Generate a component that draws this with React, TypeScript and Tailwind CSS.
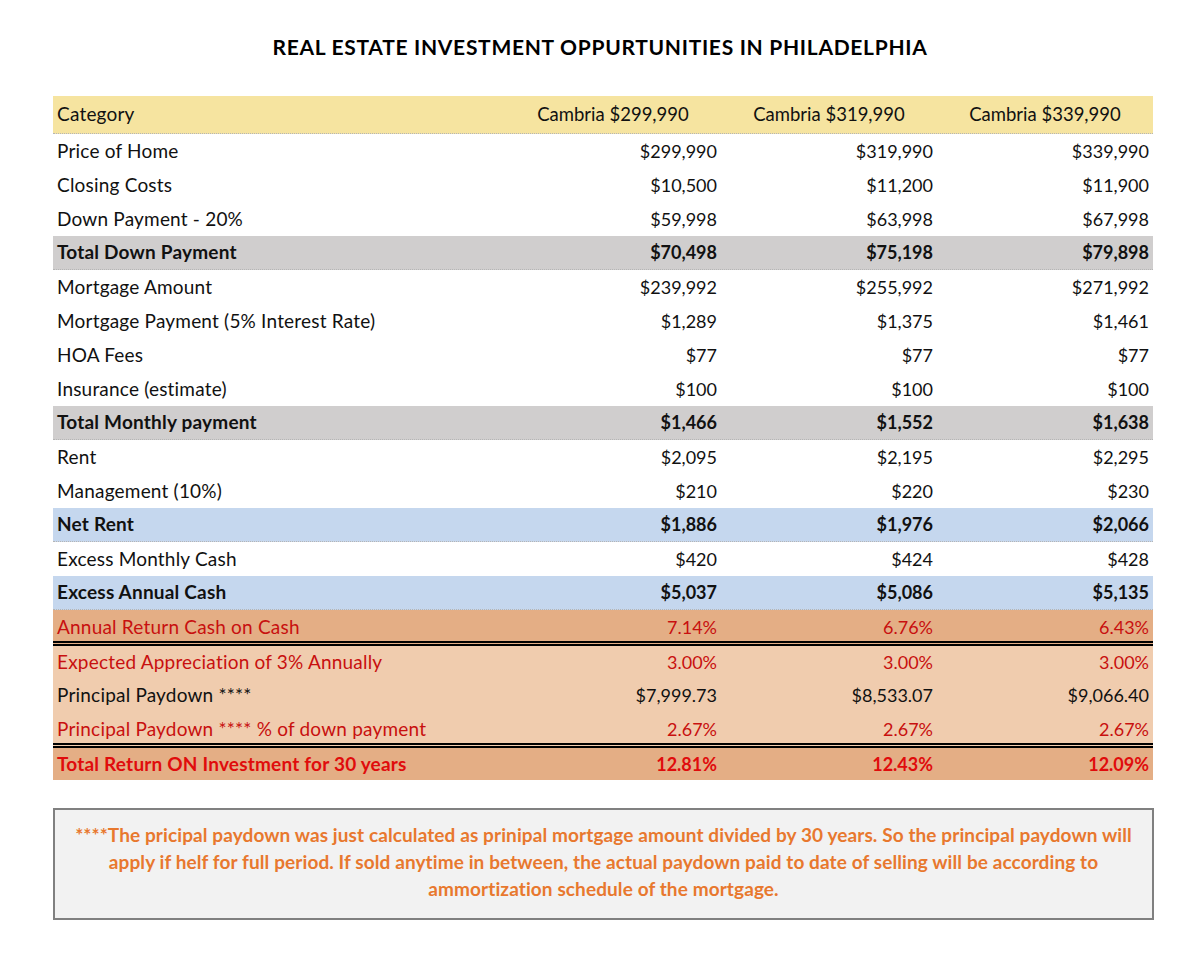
import React from 'react'

type Tone = 'plain' | 'gray' | 'blue' | 'orangeDark' | 'orangeLight'

type Row = {
  label: string
  values: string[]
  tone: Tone
  bold?: boolean
  red?: boolean
  bottom?: 'dotted' | 'double'
}

const rows: Row[] = [
  { label: 'Price of Home', values: ['$299,990', '$319,990', '$339,990'], tone: 'plain' },
  { label: 'Closing Costs', values: ['$10,500', '$11,200', '$11,900'], tone: 'plain' },
  { label: 'Down Payment - 20%', values: ['$59,998', '$63,998', '$67,998'], tone: 'plain' },
  { label: 'Total Down Payment', values: ['$70,498', '$75,198', '$79,898'], tone: 'gray', bold: true, bottom: 'dotted' },
  { label: 'Mortgage Amount', values: ['$239,992', '$255,992', '$271,992'], tone: 'plain' },
  { label: 'Mortgage Payment (5% Interest Rate)', values: ['$1,289', '$1,375', '$1,461'], tone: 'plain' },
  { label: 'HOA Fees', values: ['$77', '$77', '$77'], tone: 'plain' },
  { label: 'Insurance (estimate)', values: ['$100', '$100', '$100'], tone: 'plain' },
  { label: 'Total Monthly payment', values: ['$1,466', '$1,552', '$1,638'], tone: 'gray', bold: true, bottom: 'dotted' },
  { label: 'Rent', values: ['$2,095', '$2,195', '$2,295'], tone: 'plain' },
  { label: 'Management (10%)', values: ['$210', '$220', '$230'], tone: 'plain' },
  { label: 'Net Rent', values: ['$1,886', '$1,976', '$2,066'], tone: 'blue', bold: true, bottom: 'dotted' },
  { label: 'Excess Monthly Cash', values: ['$420', '$424', '$428'], tone: 'plain' },
  { label: 'Excess Annual Cash', values: ['$5,037', '$5,086', '$5,135'], tone: 'blue', bold: true, bottom: 'dotted' },
  { label: 'Annual Return Cash on Cash', values: ['7.14%', '6.76%', '6.43%'], tone: 'orangeDark', red: true, bottom: 'double' },
  { label: 'Expected Appreciation of 3% Annually', values: ['3.00%', '3.00%', '3.00%'], tone: 'orangeLight', red: true },
  { label: 'Principal Paydown ****', values: ['$7,999.73', '$8,533.07', '$9,066.40'], tone: 'orangeLight' },
  { label: 'Principal Paydown **** % of down payment', values: ['2.67%', '2.67%', '2.67%'], tone: 'orangeLight', red: true, bottom: 'double' },
  { label: 'Total Return ON Investment for 30 years', values: ['12.81%', '12.43%', '12.09%'], tone: 'orangeDark', bold: true, red: true },
]

const toneBg: Record<Tone, string> = {
  plain: 'bg-white',
  gray: 'bg-[#d0cece]',
  blue: 'bg-[#c5d7ee]',
  orangeDark: 'bg-[#e4ae85]',
  orangeLight: 'bg-[#f0ccae]',
}

function TableRow({ row, afterDouble }: { row: Row; afterDouble: boolean }) {
  const textColor = row.red
    ? (row.bold ? 'text-[#e00c0c]' : 'text-[#c8100f]')
    : 'text-[#111111]'
  const border = row.bottom === 'dotted'
    ? 'border-b border-dotted border-[#b5b5b5]'
    : row.bottom === 'double'
      ? 'border-b-[5px] border-double border-black'
      : ''
  // the double rule straddles the row boundary: that row grows 2px, the next one shrinks 2px
  const height = row.bottom === 'double' ? 'h-[36px]' : afterDouble ? 'h-[32px]' : 'h-[34px]'
  const nudge = row.bottom === 'double' ? 'pt-[3px]' : ''
  return (
    <div className={`box-border ${height} grid grid-cols-[452px_216px_216px_216px] ${toneBg[row.tone]} ${border} ${row.bold ? 'font-bold' : ''} ${textColor}`}>
      <div className={`flex items-center pl-[4px] whitespace-nowrap text-[19px] tracking-[0.2px] ${nudge}`}>{row.label}</div>
      {row.values.map((v, i) => (
        <div key={i} className={`flex items-center justify-end pr-[4px] text-[18px] ${nudge}`}>{v}</div>
      ))}
    </div>
  )
}

export default function App() {
  return (
    <div className="w-[1200px] h-[967px] bg-white" style={{ fontFamily: 'Lato, "Open Sans", sans-serif' }}>
      <h1 className="pt-[33px] text-center text-[21px] font-bold text-black tracking-[0.7px] leading-[28px]">
        REAL ESTATE INVESTMENT OPPURTUNITIES IN PHILADELPHIA
      </h1>

      <div className="ml-[53px] mt-[35px] w-[1100px]">
        <div className="box-border h-[38px] grid grid-cols-[452px_216px_216px_216px] bg-[#f6e4a0] border-b border-dotted border-[#b5b5b5] text-[#111111]">
          <div className="flex items-center pl-[4px] text-[19px] tracking-[0.2px]">Category</div>
          <div className="flex items-center justify-center text-[18.5px]">Cambria $299,990</div>
          <div className="flex items-center justify-center text-[18.5px]">Cambria $319,990</div>
          <div className="flex items-center justify-center text-[18.5px]">Cambria $339,990</div>
        </div>
        {rows.map((r, i) => (
          <TableRow key={r.label} row={r} afterDouble={i > 0 && rows[i - 1].bottom === 'double'} />
        ))}
      </div>

      <div className="box-border ml-[53px] mt-[28px] w-[1101px] h-[112px] border-2 border-[#808080] bg-[#f2f2f2] flex items-center justify-center pb-[5px]">
        <p className="text-center text-[#e8782e] font-bold text-[19px] tracking-[0.1px] leading-[27px] whitespace-nowrap">
          ****The pricipal paydown was just calculated as prinipal mortgage amount divided by 30 years. So the principal paydown will
          <br />
          apply if helf for full period. If sold anytime in between, the actual paydown paid to date of selling will be according to
          <br />
          ammortization schedule of the mortgage.
        </p>
      </div>
    </div>
  )
}
